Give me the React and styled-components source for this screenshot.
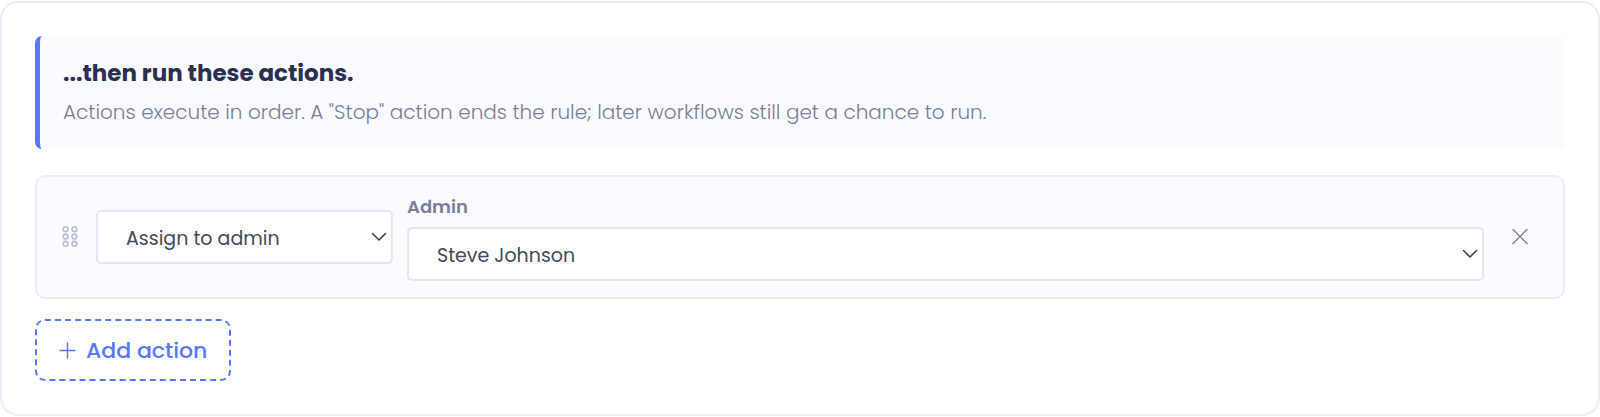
import React, { useState } from "react";
import styled, { createGlobalStyle } from "styled-components";

const GlobalStyle = createGlobalStyle`
  *, *::before, *::after {
    box-sizing: border-box;
  }

  body {
    margin: 0;
    padding: 1px 0;
    background-color: #fff;
    font-family: Poppins, Inter, sans-serif;
  }
`;

const Card = styled.section`
  padding: 33px;
  border: 2px solid #ebeef7;
  border-radius: 18px;
  background-color: #fff;
`;

const Intro = styled.header`
  margin-bottom: 26px;
  padding: 20px 22px 20px 23px;
  border-left: 5px solid #5a78ff;
  border-radius: 7px;
  background-color: #fafbff;
`;

const Title = styled.h2`
  margin: 0 0 6px;
  color: #2a3052;
  font-size: 23px;
  font-weight: 700;
  line-height: 34px;
`;

const Description = styled.p`
  margin: 0;
  color: #7a809c;
  font-size: 20px;
  font-weight: 300;
  line-height: 33px;
`;

const ActionRow = styled.div`
  display: flex;
  align-items: center;
  gap: 14px;
  margin-bottom: 20px;
  padding: 16px 21px;
  border: 2px solid #eceef7;
  border-radius: 10px;
  background-color: #fafbff;
`;

const IconButton = styled.button`
  display: flex;
  align-items: center;
  justify-content: center;
  width: ${(props) => props.$width}px;
  height: 44px;
  padding: 0;
  border: none;
  background: none;
  color: ${(props) => props.$color};
  cursor: ${(props) => props.$cursor || "pointer"};
`;

const Field = styled.div`
  display: flex;
  flex-direction: column;
  flex: ${(props) => (props.$grow ? "1" : "0 0 297px")};
  min-width: 0;
`;

const Label = styled.label`
  margin-bottom: 6px;
  color: #7a809c;
  font-size: 18px;
  font-weight: 600;
  line-height: 28px;
`;

const SelectWrap = styled.div`
  position: relative;
`;

const Select = styled.select`
  display: block;
  width: 100%;
  height: 54px;
  padding: 2px 36px 0 28px;
  border: 2px solid #e5e7f0;
  border-radius: 5px;
  appearance: none;
  background-color: #fff;
  color: #444b57;
  font-family: inherit;
  font-size: 19px;
  font-weight: 400;
`;

const Chevron = styled.svg`
  position: absolute;
  top: 50%;
  right: 6px;
  transform: translateY(-50%);
  pointer-events: none;
`;

const AddButton = styled.button`
  display: inline-flex;
  align-items: center;
  gap: 10px;
  height: 62px;
  padding: 0 22px;
  border: 2px dashed #5a78ff;
  border-radius: 10px;
  background-color: #fff;
  color: #5a78ff;
  font-family: inherit;
  font-size: 22px;
  font-weight: 500;
  cursor: pointer;
`;

const GripIcon = () => (
  <svg width="16" height="22" viewBox="0 0 16 22" fill="none" stroke="currentColor" strokeWidth="1.6" aria-hidden="true">
    {[3.2, 10.5, 17.8].map((cy) => (
      <g key={cy}>
        <circle cx="3.6" cy={cy} r="2.4" />
        <circle cx="12.4" cy={cy} r="2.4" />
      </g>
    ))}
  </svg>
);

const CloseIcon = () => (
  <svg width="16" height="16" viewBox="0 0 16 16" stroke="currentColor" strokeWidth="1.4" strokeLinecap="round" aria-hidden="true">
    <path d="M1 .5l14 14M15 .5L1 14.500" />
  </svg>
);

const PlusIcon = () => (
  <svg width="17" height="17" viewBox="0 0 17 17" stroke="currentColor" strokeWidth="1.4" strokeLinecap="round" aria-hidden="true">
    <path d="M8.5 1v15M1 8.5h15" />
  </svg>
);

const SelectBox = ({ children, ...props }) => (
  <SelectWrap>
    <Select {...props}>{children}</Select>
    <Chevron width="16" height="10" viewBox="0 0 16 10" fill="none" stroke="#3b414d" strokeWidth="1.6" strokeLinecap="round" strokeLinejoin="round" aria-hidden="true">
      <path d="M1.5 1.5L8 8l6.500-6.500" />
    </Chevron>
  </SelectWrap>
);

const App = () => {
  const [rows, setRows] = useState([{ id: 1, type: "assign", admin: "steve" }]);

  const update = (id, values) => setRows(rows.map((row) => (row.id === id ? { ...row, ...values } : row)));
  const add = () => setRows([...rows, { id: Date.now(), type: "assign", admin: "steve" }]);
  const remove = (id) => setRows(rows.filter((row) => row.id !== id));

  return (
    <>
      <GlobalStyle />
      <Card>
        <Intro>
          <Title>...then run these actions.</Title>
          <Description>
            Actions execute in order. A "Stop" action ends the rule; later workflows still get a chance to run.
          </Description>
        </Intro>
        {rows.map((row) => (
          <ActionRow key={row.id}>
            <IconButton type="button" $width={24} $color="#b9bdd4" $cursor="grab" aria-label="Reorder action">
              <GripIcon />
            </IconButton>
            <Field>
              <SelectBox aria-label="Action" value={row.type} onChange={(e) => update(row.id, { type: e.target.value })}>
                <option value="assign">Assign to admin</option>
              </SelectBox>
            </Field>
            <Field $grow>
              <Label htmlFor={`admin-${row.id}`}>Admin</Label>
              <SelectBox id={`admin-${row.id}`} value={row.admin} onChange={(e) => update(row.id, { admin: e.target.value })}>
                <option value="steve">Steve Johnson</option>
              </SelectBox>
            </Field>
            <IconButton type="button" $width={44} $color="#7a809c" aria-label="Remove action" onClick={() => remove(row.id)}>
              <CloseIcon />
            </IconButton>
          </ActionRow>
        ))}
        <AddButton type="button" onClick={add}>
          <PlusIcon />
          Add action
        </AddButton>
      </Card>
    </>
  );
};

export default App;
